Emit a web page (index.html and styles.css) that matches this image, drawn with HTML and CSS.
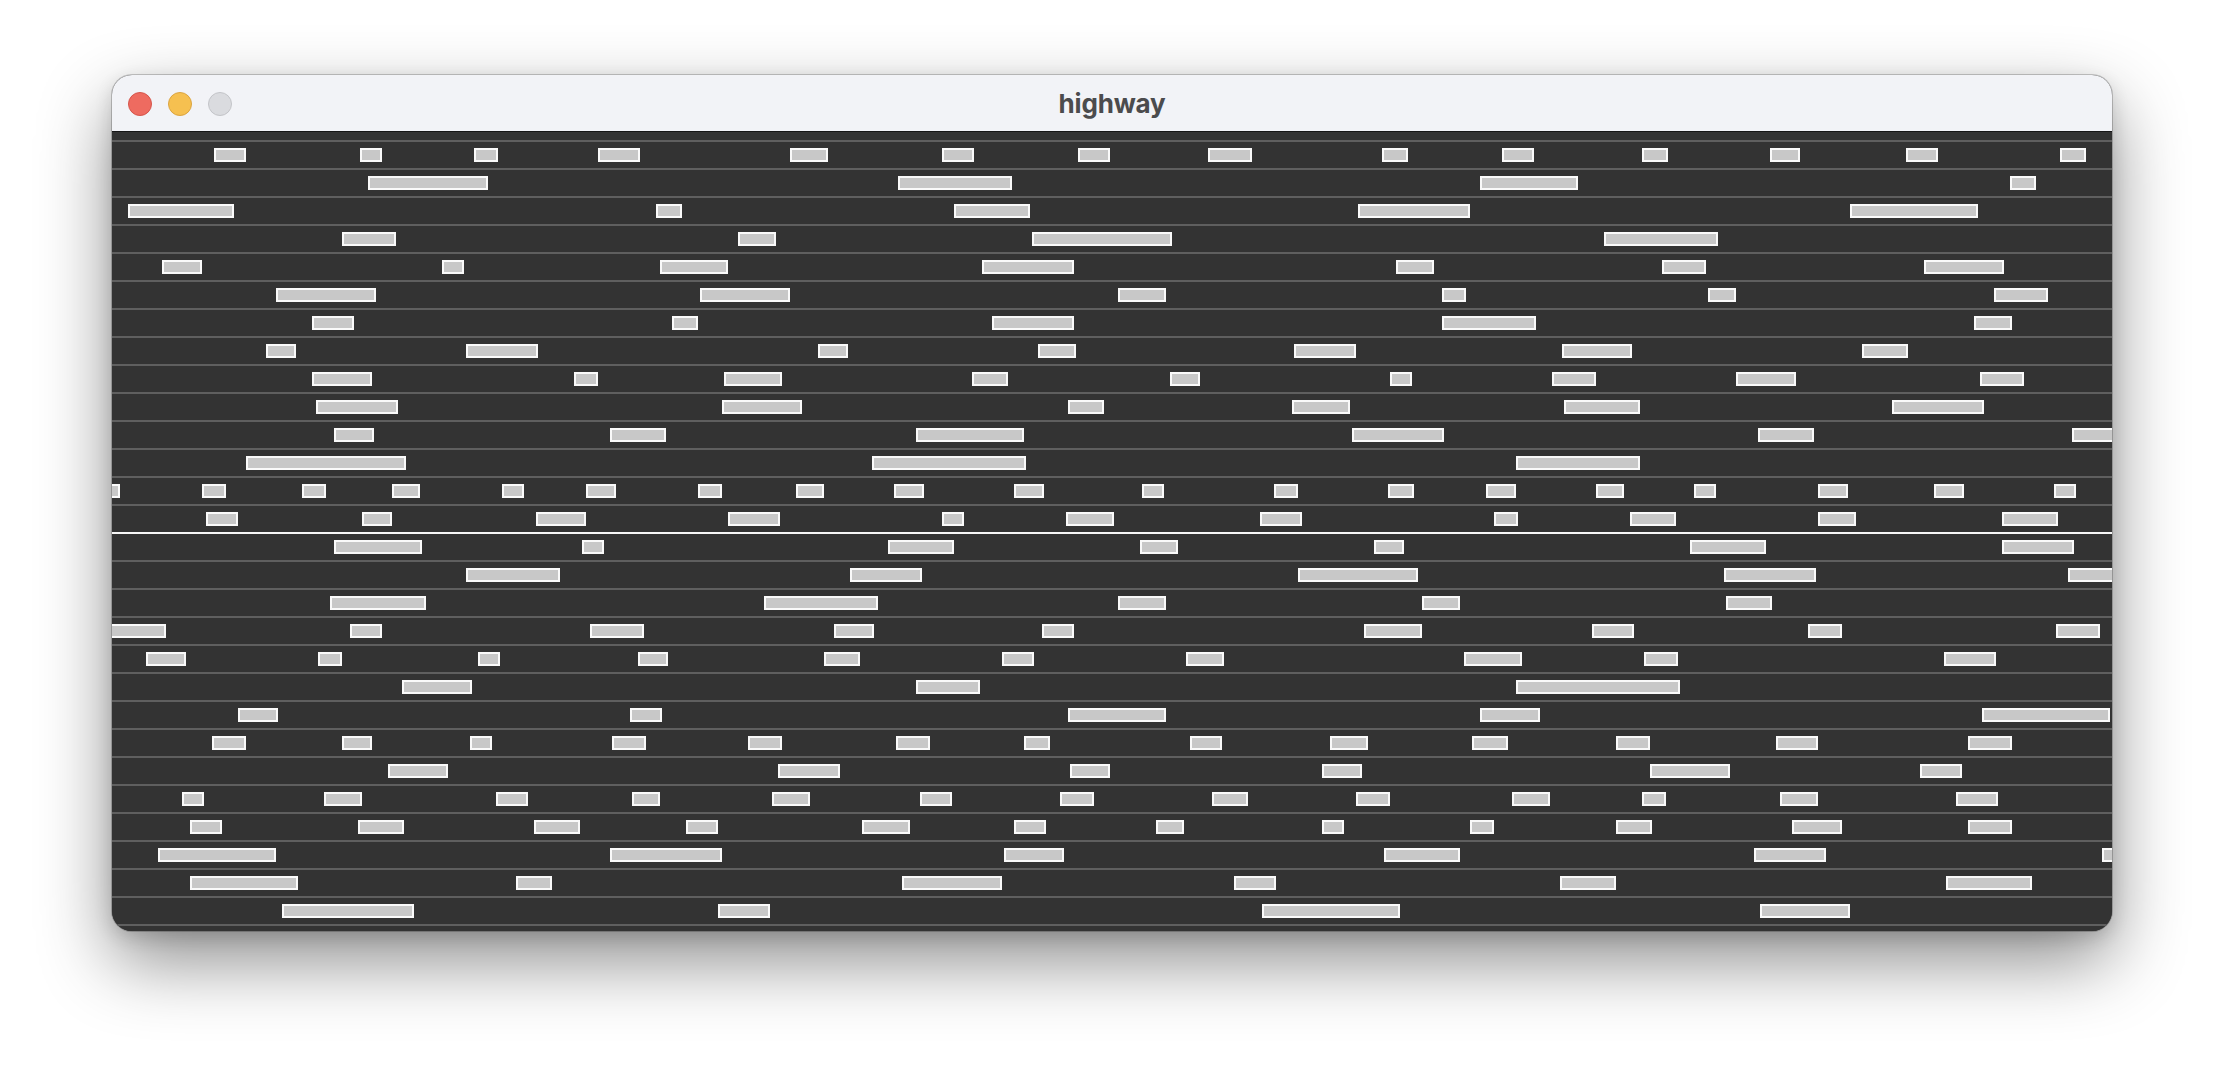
FILE: index.html
```html
<!DOCTYPE html>
<html lang="en">
<head>
<meta charset="utf-8">
<title>highway</title>
<link rel="stylesheet" href="styles.css">
</head>
<body>
<div class="window">
  <div class="titlebar">
    <div class="lights">
      <span class="light red"></span>
      <span class="light yellow"></span>
      <span class="light gray"></span>
    </div>
    <div class="title">highway</div>
  </div>
  <div class="road">
    <div class="lane">
      <div class="car" style="left:102px;width:32px"></div><div class="car" style="left:248px;width:22px"></div><div class="car" style="left:362px;width:24px"></div><div class="car" style="left:486px;width:42px"></div><div class="car" style="left:678px;width:38px"></div><div class="car" style="left:830px;width:32px"></div><div class="car" style="left:966px;width:32px"></div><div class="car" style="left:1096px;width:44px"></div><div class="car" style="left:1270px;width:26px"></div><div class="car" style="left:1390px;width:32px"></div><div class="car" style="left:1530px;width:26px"></div><div class="car" style="left:1658px;width:30px"></div><div class="car" style="left:1794px;width:32px"></div><div class="car" style="left:1948px;width:26px"></div>
    </div>
    <div class="lane">
      <div class="car" style="left:256px;width:120px"></div><div class="car" style="left:786px;width:114px"></div><div class="car" style="left:1368px;width:98px"></div><div class="car" style="left:1898px;width:26px"></div>
    </div>
    <div class="lane">
      <div class="car" style="left:16px;width:106px"></div><div class="car" style="left:544px;width:26px"></div><div class="car" style="left:842px;width:76px"></div><div class="car" style="left:1246px;width:112px"></div><div class="car" style="left:1738px;width:128px"></div>
    </div>
    <div class="lane">
      <div class="car" style="left:230px;width:54px"></div><div class="car" style="left:626px;width:38px"></div><div class="car" style="left:920px;width:140px"></div><div class="car" style="left:1492px;width:114px"></div>
    </div>
    <div class="lane">
      <div class="car" style="left:50px;width:40px"></div><div class="car" style="left:330px;width:22px"></div><div class="car" style="left:548px;width:68px"></div><div class="car" style="left:870px;width:92px"></div><div class="car" style="left:1284px;width:38px"></div><div class="car" style="left:1550px;width:44px"></div><div class="car" style="left:1812px;width:80px"></div>
    </div>
    <div class="lane">
      <div class="car" style="left:164px;width:100px"></div><div class="car" style="left:588px;width:90px"></div><div class="car" style="left:1006px;width:48px"></div><div class="car" style="left:1330px;width:24px"></div><div class="car" style="left:1596px;width:28px"></div><div class="car" style="left:1882px;width:54px"></div>
    </div>
    <div class="lane">
      <div class="car" style="left:200px;width:42px"></div><div class="car" style="left:560px;width:26px"></div><div class="car" style="left:880px;width:82px"></div><div class="car" style="left:1330px;width:94px"></div><div class="car" style="left:1862px;width:38px"></div>
    </div>
    <div class="lane">
      <div class="car" style="left:154px;width:30px"></div><div class="car" style="left:354px;width:72px"></div><div class="car" style="left:706px;width:30px"></div><div class="car" style="left:926px;width:38px"></div><div class="car" style="left:1182px;width:62px"></div><div class="car" style="left:1450px;width:70px"></div><div class="car" style="left:1750px;width:46px"></div>
    </div>
    <div class="lane">
      <div class="car" style="left:200px;width:60px"></div><div class="car" style="left:462px;width:24px"></div><div class="car" style="left:612px;width:58px"></div><div class="car" style="left:860px;width:36px"></div><div class="car" style="left:1058px;width:30px"></div><div class="car" style="left:1278px;width:22px"></div><div class="car" style="left:1440px;width:44px"></div><div class="car" style="left:1624px;width:60px"></div><div class="car" style="left:1868px;width:44px"></div>
    </div>
    <div class="lane">
      <div class="car" style="left:204px;width:82px"></div><div class="car" style="left:610px;width:80px"></div><div class="car" style="left:956px;width:36px"></div><div class="car" style="left:1180px;width:58px"></div><div class="car" style="left:1452px;width:76px"></div><div class="car" style="left:1780px;width:92px"></div>
    </div>
    <div class="lane">
      <div class="car" style="left:222px;width:40px"></div><div class="car" style="left:498px;width:56px"></div><div class="car" style="left:804px;width:108px"></div><div class="car" style="left:1240px;width:92px"></div><div class="car" style="left:1646px;width:56px"></div><div class="car" style="left:1960px;width:56px"></div>
    </div>
    <div class="lane">
      <div class="car" style="left:134px;width:160px"></div><div class="car" style="left:760px;width:154px"></div><div class="car" style="left:1404px;width:124px"></div>
    </div>
    <div class="lane">
      <div class="car" style="left:-16px;width:24px"></div><div class="car" style="left:90px;width:24px"></div><div class="car" style="left:190px;width:24px"></div><div class="car" style="left:280px;width:28px"></div><div class="car" style="left:390px;width:22px"></div><div class="car" style="left:474px;width:30px"></div><div class="car" style="left:586px;width:24px"></div><div class="car" style="left:684px;width:28px"></div><div class="car" style="left:782px;width:30px"></div><div class="car" style="left:902px;width:30px"></div><div class="car" style="left:1030px;width:22px"></div><div class="car" style="left:1162px;width:24px"></div><div class="car" style="left:1276px;width:26px"></div><div class="car" style="left:1374px;width:30px"></div><div class="car" style="left:1484px;width:28px"></div><div class="car" style="left:1582px;width:22px"></div><div class="car" style="left:1706px;width:30px"></div><div class="car" style="left:1822px;width:30px"></div><div class="car" style="left:1942px;width:22px"></div>
    </div>
    <div class="lane">
      <div class="car" style="left:94px;width:32px"></div><div class="car" style="left:250px;width:30px"></div><div class="car" style="left:424px;width:50px"></div><div class="car" style="left:616px;width:52px"></div><div class="car" style="left:830px;width:22px"></div><div class="car" style="left:954px;width:48px"></div><div class="car" style="left:1148px;width:42px"></div><div class="car" style="left:1382px;width:24px"></div><div class="car" style="left:1518px;width:46px"></div><div class="car" style="left:1706px;width:38px"></div><div class="car" style="left:1890px;width:56px"></div>
    </div>
    <div class="lane lane-center">
      <div class="car" style="left:222px;width:88px"></div><div class="car" style="left:470px;width:22px"></div><div class="car" style="left:776px;width:66px"></div><div class="car" style="left:1028px;width:38px"></div><div class="car" style="left:1262px;width:30px"></div><div class="car" style="left:1578px;width:76px"></div><div class="car" style="left:1890px;width:72px"></div>
    </div>
    <div class="lane">
      <div class="car" style="left:354px;width:94px"></div><div class="car" style="left:738px;width:72px"></div><div class="car" style="left:1186px;width:120px"></div><div class="car" style="left:1612px;width:92px"></div><div class="car" style="left:1956px;width:48px"></div>
    </div>
    <div class="lane">
      <div class="car" style="left:218px;width:96px"></div><div class="car" style="left:652px;width:114px"></div><div class="car" style="left:1006px;width:48px"></div><div class="car" style="left:1310px;width:38px"></div><div class="car" style="left:1614px;width:46px"></div>
    </div>
    <div class="lane">
      <div class="car" style="left:-10px;width:64px"></div><div class="car" style="left:238px;width:32px"></div><div class="car" style="left:478px;width:54px"></div><div class="car" style="left:722px;width:40px"></div><div class="car" style="left:930px;width:32px"></div><div class="car" style="left:1252px;width:58px"></div><div class="car" style="left:1480px;width:42px"></div><div class="car" style="left:1696px;width:34px"></div><div class="car" style="left:1944px;width:44px"></div>
    </div>
    <div class="lane">
      <div class="car" style="left:34px;width:40px"></div><div class="car" style="left:206px;width:24px"></div><div class="car" style="left:366px;width:22px"></div><div class="car" style="left:526px;width:30px"></div><div class="car" style="left:712px;width:36px"></div><div class="car" style="left:890px;width:32px"></div><div class="car" style="left:1074px;width:38px"></div><div class="car" style="left:1352px;width:58px"></div><div class="car" style="left:1532px;width:34px"></div><div class="car" style="left:1832px;width:52px"></div>
    </div>
    <div class="lane">
      <div class="car" style="left:290px;width:70px"></div><div class="car" style="left:804px;width:64px"></div><div class="car" style="left:1404px;width:164px"></div>
    </div>
    <div class="lane">
      <div class="car" style="left:126px;width:40px"></div><div class="car" style="left:518px;width:32px"></div><div class="car" style="left:956px;width:98px"></div><div class="car" style="left:1368px;width:60px"></div><div class="car" style="left:1870px;width:128px"></div>
    </div>
    <div class="lane">
      <div class="car" style="left:100px;width:34px"></div><div class="car" style="left:230px;width:30px"></div><div class="car" style="left:358px;width:22px"></div><div class="car" style="left:500px;width:34px"></div><div class="car" style="left:636px;width:34px"></div><div class="car" style="left:784px;width:34px"></div><div class="car" style="left:912px;width:26px"></div><div class="car" style="left:1078px;width:32px"></div><div class="car" style="left:1218px;width:38px"></div><div class="car" style="left:1360px;width:36px"></div><div class="car" style="left:1504px;width:34px"></div><div class="car" style="left:1664px;width:42px"></div><div class="car" style="left:1856px;width:44px"></div>
    </div>
    <div class="lane">
      <div class="car" style="left:276px;width:60px"></div><div class="car" style="left:666px;width:62px"></div><div class="car" style="left:958px;width:40px"></div><div class="car" style="left:1210px;width:40px"></div><div class="car" style="left:1538px;width:80px"></div><div class="car" style="left:1808px;width:42px"></div>
    </div>
    <div class="lane">
      <div class="car" style="left:70px;width:22px"></div><div class="car" style="left:212px;width:38px"></div><div class="car" style="left:384px;width:32px"></div><div class="car" style="left:520px;width:28px"></div><div class="car" style="left:660px;width:38px"></div><div class="car" style="left:808px;width:32px"></div><div class="car" style="left:948px;width:34px"></div><div class="car" style="left:1100px;width:36px"></div><div class="car" style="left:1244px;width:34px"></div><div class="car" style="left:1400px;width:38px"></div><div class="car" style="left:1530px;width:24px"></div><div class="car" style="left:1668px;width:38px"></div><div class="car" style="left:1844px;width:42px"></div>
    </div>
    <div class="lane">
      <div class="car" style="left:78px;width:32px"></div><div class="car" style="left:246px;width:46px"></div><div class="car" style="left:422px;width:46px"></div><div class="car" style="left:574px;width:32px"></div><div class="car" style="left:750px;width:48px"></div><div class="car" style="left:902px;width:32px"></div><div class="car" style="left:1044px;width:28px"></div><div class="car" style="left:1210px;width:22px"></div><div class="car" style="left:1358px;width:24px"></div><div class="car" style="left:1504px;width:36px"></div><div class="car" style="left:1680px;width:50px"></div><div class="car" style="left:1856px;width:44px"></div>
    </div>
    <div class="lane">
      <div class="car" style="left:46px;width:118px"></div><div class="car" style="left:498px;width:112px"></div><div class="car" style="left:892px;width:60px"></div><div class="car" style="left:1272px;width:76px"></div><div class="car" style="left:1642px;width:72px"></div><div class="car" style="left:1990px;width:30px"></div>
    </div>
    <div class="lane">
      <div class="car" style="left:78px;width:108px"></div><div class="car" style="left:404px;width:36px"></div><div class="car" style="left:790px;width:100px"></div><div class="car" style="left:1122px;width:42px"></div><div class="car" style="left:1448px;width:56px"></div><div class="car" style="left:1834px;width:86px"></div>
    </div>
    <div class="lane">
      <div class="car" style="left:170px;width:132px"></div><div class="car" style="left:606px;width:52px"></div><div class="car" style="left:1150px;width:138px"></div><div class="car" style="left:1648px;width:90px"></div>
    </div>
  </div>
</div>
</body>
</html>
```

FILE: styles.css
```css
html, body {
  margin: 0;
  padding: 0;
}

body {
  background: #ffffff;
  padding: 75px 0 0 112px;
  width: 2224px;
  height: 1080px;
  box-sizing: border-box;
  overflow: hidden;
  font-family: "Inter", "Liberation Sans", sans-serif;
}

.window {
  width: 2000px;
  height: 856px;
  border-radius: 20px;
  overflow: hidden;
  display: flex;
  flex-direction: column;
  box-shadow: 0 0 0 1px rgba(0, 0, 0, 0.2), 0 30px 72px rgba(0, 0, 0, 0.45), 0 6px 18px rgba(0, 0, 0, 0.14);
  background: #333333;
}

.titlebar {
  height: 56px;
  flex: none;
  background: #f2f3f7;
  border-bottom: 1px solid #161616;
  position: relative;
  display: flex;
  align-items: center;
  justify-content: center;
}

.lights {
  position: absolute;
  left: 16px;
  top: 17px;
  display: flex;
  gap: 16px;
}

.light {
  width: 24px;
  height: 24px;
  border-radius: 50%;
  box-sizing: border-box;
  border: 1px solid;
}

.light.red {
  background: #ee6b60;
  border-color: #d5554b;
}

.light.yellow {
  background: #f6c050;
  border-color: #dba441;
}

.light.gray {
  background: #dadbdf;
  border-color: #c3c4c8;
}

.title {
  font-size: 26px;
  font-weight: 700;
  color: #4b4b4d;
  letter-spacing: -0.2px;
}

.road {
  flex: 1;
  padding: 8px 0 5px;
  display: flex;
  flex-direction: column;
  background: #333333;
}

.lane {
  position: relative;
  height: 28px;
  flex: none;
  box-sizing: border-box;
  border-top: 2px solid #5f5f5f;
  overflow: hidden;
}

.lane:last-child {
  height: 30px;
  border-bottom: 2px solid #5f5f5f;
}

.lane-center {
  border-top-color: #f7f7f7;
}

.car {
  position: absolute;
  top: 6px;
  height: 14px;
  box-sizing: border-box;
  border: 2px solid #fafafa;
  background: #c8c8c8;
}
```
